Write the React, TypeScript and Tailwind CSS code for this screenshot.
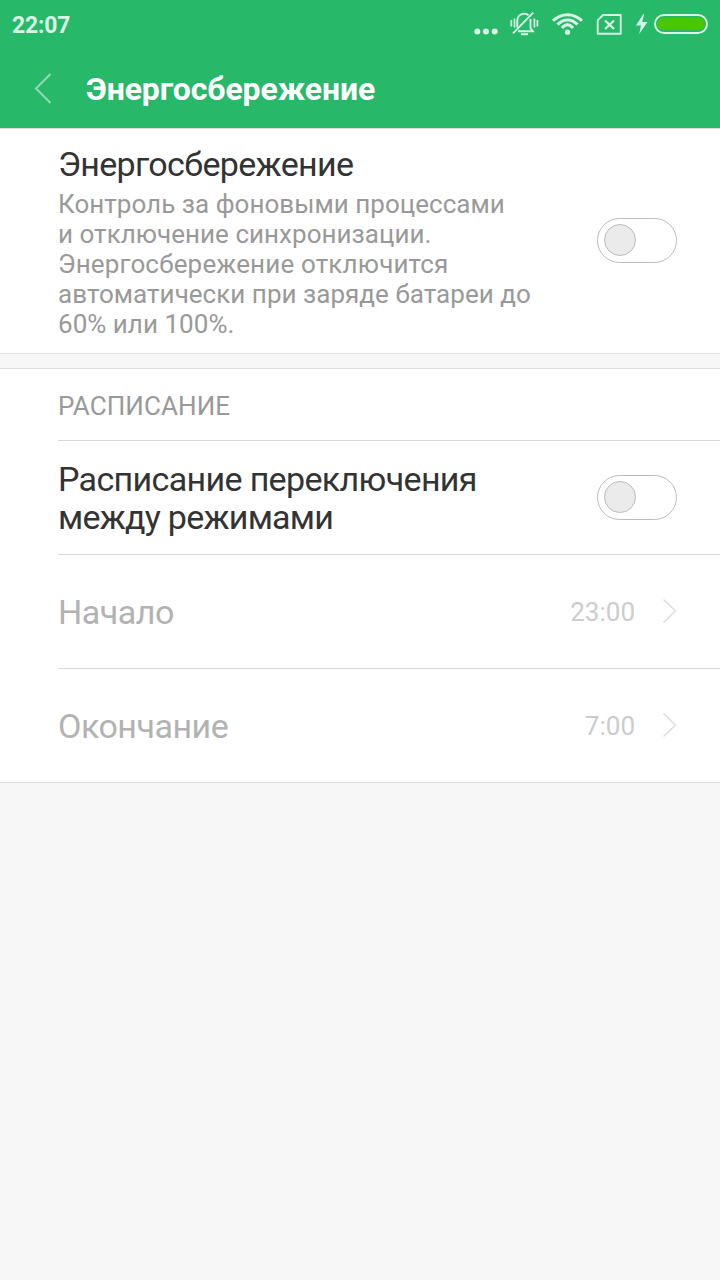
import type { ReactNode } from "react";

function StatusBar() {
  return (
    <div className="flex h-[50px] items-center justify-between pl-3 pr-3 text-[#d8f4e4]">
      <span className="pt-0.5 text-[23px] leading-[50px] font-bold tracking-[-0.2px]">22:07</span>
      <div className="flex h-full">
        <svg width="234" height="50" viewBox="474 0 234 50" fill="none" stroke="currentColor">
          <g fill="currentColor" stroke="none">
            <circle cx="477.3" cy="31.5" r="3" />
            <circle cx="486" cy="31.5" r="3" />
            <circle cx="494.7" cy="31.5" r="3" />
          </g>
          {/* muted bell */}
          <g strokeWidth="1.9">
            <path d="M517.3 27.5V21c0-4.6 3-7.2 7-7.2 1.8 0 3.2.5 4.3 1.5M530.5 19V28l2.3 3.2H518" />
            <path d="M513 33.3 533.2 12.7" />
            <path d="M521 34.2h7" strokeWidth="2" />
            <path d="M511.3 20v6.5M514.5 18.5v9M537.4 20v6.5M534.4 18.5v9" strokeWidth="1.7" />
          </g>
          <g strokeWidth="3">
            <path d="M553 20.8c8.2-8.2 20.8-8.2 29 0" />
            <path d="M557.5 24.6c5.8-6.3 14.2-6.3 20 0" />
            <path d="M562 28.2c3.3-4.6 7.7-4.6 11 0" />
            <circle cx="567.5" cy="32.2" r="2.6" fill="currentColor" stroke="none" />
          </g>
          <path d="M603 15h17.7v18.7h-23V20.3Z" strokeWidth="1.9" strokeLinejoin="round" />
          <path d="m605 20.5 9 8.5m0-8.5-9 8.5" strokeWidth="2.4" />
          <path d="m643.3 14-7.3 11.5h5l-1.8 8.5 8.3-12h-5.3l2-8Z" fill="currentColor" stroke="none" />
          <rect x="655" y="15" width="52" height="18" rx="9" strokeWidth="1.9" />
          <rect x="657" y="18" width="48" height="12" rx="6" fill="#49c700" stroke="none" />
        </svg>
      </div>
    </div>
  );
}

function Toggle() {
  return (
    <div className="flex h-[45px] w-20 shrink-0 items-center rounded-full border border-[#bcbcbc] bg-white pb-px pl-1.5">
      <div className="size-8 rounded-full border border-[#bcbcbc] bg-[#ebebeb]" />
    </div>
  );
}

function Row({ className, children }: { className: string; children: ReactNode }) {
  return (
    <div className={`ml-[58px] flex items-center justify-between border-[#d8d8d8] pr-[43px] ${className}`}>
      {children}
    </div>
  );
}

function TimeRow({ label, value, className }: { label: string; value: string; className: string }) {
  return (
    <Row className={className}>
      <span className="text-[34px] leading-[38px] tracking-[-0.5px] text-[#b2b2b2]">{label}</span>
      <div className="flex items-center">
        <span className="text-[26px] leading-[30px] text-[#cccccc]">{value}</span>
        <svg className="mb-0.5 ml-[27px]" width="15" height="26" viewBox="0 0 15 26" fill="none" stroke="#e0e0e0" strokeWidth="1.7">
          <path d="m1.5 1.5 12 11.5-12 11.5" />
        </svg>
      </div>
    </Row>
  );
}

export default function App() {
  return (
    <div className="min-h-screen w-full bg-[#f7f7f7] font-[Roboto,sans-serif]">
      <header className="h-[129px] border-b border-[#dcdcdc] bg-[#28b869]">
        <StatusBar />
        <div className="flex h-[78px] items-center">
          <svg className="ml-[33px]" width="20" height="32" viewBox="0 0 20 32" fill="none" stroke="#93dbb4" strokeWidth="2">
            <path d="M17.5 1 3 15.5 17.5 30" />
          </svg>
          <h1 className="ml-[33px] text-[32px] leading-[38px] font-bold tracking-[-0.1px] text-white">Энергосбережение</h1>
        </div>
      </header>

      <section className="h-[225px] border-b border-[#e0e0e0] bg-white">
        <Row className="h-[223px]">
          <div className="pt-px">
            <h2 className="text-[34px] leading-[40px] tracking-[-0.65px] text-[#333333]">Энергосбережение</h2>
            <p className="mt-[5px] text-[26px] leading-[30px] tracking-[0.03px] text-[#999999]">
              Контроль за фоновыми процессами
              <br />
              и отключение синхронизации.
              <br />
              <span className="tracking-[0.16px]">Энергосбережение отключится</span>
              <br />
              автоматически при заряде батареи до
              <br />
              60% или 100%.
            </p>
          </div>
          <Toggle />
        </Row>
      </section>

      <section className="mt-3.5 border-y border-[#e0e0e0] bg-white">
        <Row className="h-[72px] border-b">
          <span className="pt-0.5 text-[26px] leading-[30px] tracking-[0.1px] text-[#999999]">РАСПИСАНИЕ</span>
        </Row>
        <Row className="h-[114px] border-b">
          <h2 className="text-[34px] leading-[38px] tracking-[-0.65px] text-[#333333]">
            Расписание переключения
            <br />
            <span className="tracking-[-0.75px]">между режимами</span>
          </h2>
          <Toggle />
        </Row>
        <TimeRow label="Начало" value="23:00" className="h-[114px] border-b" />
        <TimeRow label="Окончание" value="7:00" className="h-[113px]" />
      </section>
    </div>
  );
}
